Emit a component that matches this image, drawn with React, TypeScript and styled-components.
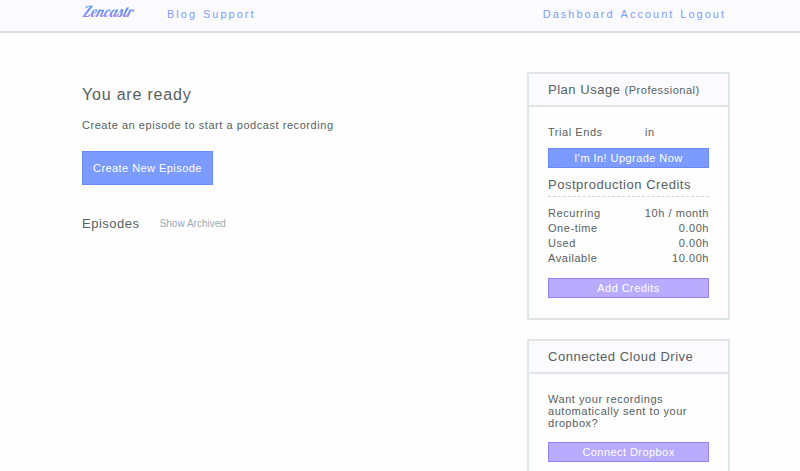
import React from "react";
import styled, { createGlobalStyle, css } from "styled-components";

const GlobalStyle = createGlobalStyle`
  * { box-sizing: border-box; }
  html { scrollbar-width: none; }
  body {
    margin: 0;
    background: #fefefe;
    color: #566060;
    font: 11px/12px "Liberation Sans", Arial, sans-serif;
  }
  h1, h2, h3, p, dl, dd, dt { margin: 0; font-weight: 400; }
  h1, p, dl { letter-spacing: 0.05em; }
  h2, h3, button { letter-spacing: 0.04em; }
`;

const TopBar = styled.header`
  display: flex;
  align-items: flex-start;
  height: 33px;
  padding: 4px 74px 0 82px;
  border-bottom: 2px solid #dce0e2;
  background: repeating-linear-gradient(90deg, #fafaff 0 2px, #fcfcff 2px 4px);
`;

const Logo = styled.a`
  width: 85px;
  font: italic 400 15px/16px Lobster, "Liberation Serif", serif;
  text-decoration: none;
  color: transparent;
  background: linear-gradient(#4a9af5 20%, #a884f8 90%);
  background-clip: text;
`;

const Nav = styled.nav<{ $end?: boolean }>`
  display: flex;
  gap: 6px;
  padding-top: 4px;
  ${(p) => p.$end && css`margin-left: auto;`}
`;

const NavLink = styled.a`
  color: #7f9bfb;
  letter-spacing: 2px;
  text-decoration: none;
`;

const Page = styled.div`
  display: flex;
  align-items: flex-start;
  justify-content: space-between;
  gap: 24px;
  padding: 39px 70px 0 82px;
`;

const Main = styled.main`
  flex: 1;
  padding-top: 13px;
`;

const Title = styled.h1`
  font-size: 16px;
  line-height: 20px;
`;

const Intro = styled.p`
  margin: 14px 0 20px;
`;

const Button = styled.button<{ $tone?: "blue" | "violet"; $large?: boolean }>`
  display: block;
  width: ${(p) => (p.$large ? "auto" : "100%")};
  padding: ${(p) => (p.$large ? "10px" : "3px 10px")};
  border: 1px solid ${(p) => (p.$tone === "violet" ? "#9583f8" : "#6a88f8")};
  background: ${(p) => (p.$tone === "violet" ? "#b9abfe" : "#7b9bfe")};
  color: #fff;
  font: inherit;
  cursor: pointer;
`;

const EpisodesBar = styled.div`
  display: flex;
  align-items: center;
  gap: 20px;
  margin-top: 31px;
`;

const Heading = styled.h2`
  font-size: 13px;
  line-height: 16px;
`;

const ArchiveLink = styled.a`
  color: #9aabb2;
  font-size: 10px;
  text-decoration: none;
`;

const Sidebar = styled.aside`
  display: grid;
  flex: 0 0 203px;
  gap: 19px;
`;

const Card = styled.section`
  border: 2px solid #e0e6e7;
  background: #fefefe;
`;

const CardHeader = styled.header`
  padding: 8px 19px 7px;
  border-bottom: 2px solid #e0e6e7;
  background: repeating-linear-gradient(90deg, #fafaff 0 2px, #fcfcff 2px 4px);
`;

const Small = styled.small`
  font-size: 11px;
`;

const CardBody = styled.div`
  padding: 19px 19px 20px;
`;

const Trial = styled.p`
  display: grid;
  grid-template-columns: 97px 1fr;
  margin-bottom: 10px;
`;

const Subheading = styled.h3`
  margin: 9px 0;
  padding-bottom: 3px;
  border-bottom: 1px dashed #ccd4d6;
  font-size: 13px;
  line-height: 16px;
`;

const Credits = styled.dl`
  margin-bottom: 12px;
`;

const CreditRow = styled.div`
  display: flex;
  justify-content: space-between;
  line-height: 15px;
`;

const Note = styled.p`
  margin-bottom: 13px;
`;

const credits = [
  ["Recurring", "10h / month"],
  ["One-time", "0.00h"],
  ["Used", "0.00h"],
  ["Available", "10.00h"],
];

export default function App() {
  return (
    <>
      <GlobalStyle />
      <TopBar>
        <Logo href="#">Zencastr</Logo>
        <Nav aria-label="Site">
          <NavLink href="#blog">Blog</NavLink>
          <NavLink href="#support">Support</NavLink>
        </Nav>
        <Nav $end aria-label="Account">
          <NavLink href="#dashboard">Dashboard</NavLink>
          <NavLink href="#account">Account</NavLink>
          <NavLink href="#logout">Logout</NavLink>
        </Nav>
      </TopBar>
      <Page>
        <Main>
          <Title>You are ready</Title>
          <Intro>Create an episode to start a podcast recording</Intro>
          <Button $large>Create New Episode</Button>
          <EpisodesBar>
            <Heading>Episodes</Heading>
            <ArchiveLink href="#archived">Show Archived</ArchiveLink>
          </EpisodesBar>
        </Main>
        <Sidebar>
          <Card>
            <CardHeader>
              <Heading>
                Plan Usage <Small>(Professional)</Small>
              </Heading>
            </CardHeader>
            <CardBody>
              <Trial>
                <span>Trial Ends</span>
                <span>in</span>
              </Trial>
              <Button>I'm In! Upgrade Now</Button>
              <Subheading>Postproduction Credits</Subheading>
              <Credits>
                {credits.map(([label, value]) => (
                  <CreditRow key={label}>
                    <dt>{label}</dt>
                    <dd>{value}</dd>
                  </CreditRow>
                ))}
              </Credits>
              <Button $tone="violet">Add Credits</Button>
            </CardBody>
          </Card>
          <Card>
            <CardHeader>
              <Heading>Connected Cloud Drive</Heading>
            </CardHeader>
            <CardBody>
              <Note>Want your recordings automatically sent to your dropbox?</Note>
              <Button $tone="violet">Connect Dropbox</Button>
            </CardBody>
          </Card>
        </Sidebar>
      </Page>
    </>
  );
}
